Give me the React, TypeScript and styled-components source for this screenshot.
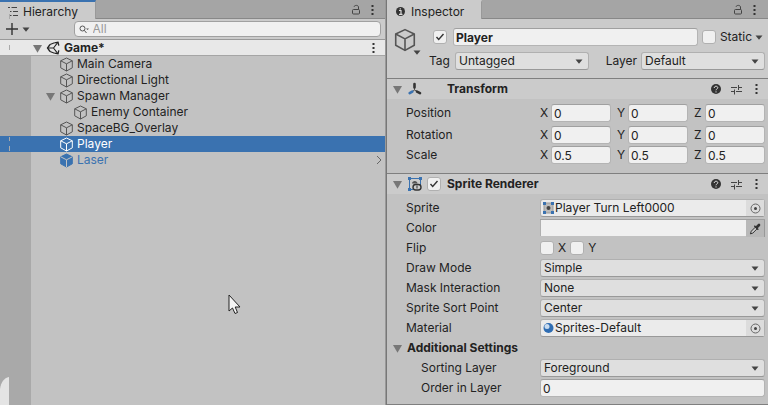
import React from "react";
import styled, { createGlobalStyle, css } from "styled-components";

const GlobalStyle = createGlobalStyle`
  *, *::before, *::after { box-sizing: border-box; }
  body {
    margin: 0;
    background: #c2c2c2;
    color: #222;
    font-family: Inter, "Liberation Sans", sans-serif;
    font-size: 12px;
    line-height: 16px;
  }
  input, select, button { font: inherit; color: inherit; margin: 0; }
  ul, h2, h3 { margin: 0; padding: 0; list-style: none; font-size: inherit; }
`;

/* ---------- page and panels ---------- */

const Editor = styled.main`
  display: grid;
  grid-template-columns: minmax(0, 386fr) minmax(0, 382fr);
  min-height: 100vh;
`;

const Panel = styled.section`
  position: relative;
  display: flex;
  flex-direction: column;
  overflow: hidden;
  background: #c2c2c2;
`;

const InspectorPanel = styled(Panel)`
  border-left: 1px solid #777;
  box-shadow: -1px 0 #999;
`;

const TabBar = styled.header`
  display: flex;
  height: 19px;
  background: #a5a5a5;
  box-shadow: inset 0 -1px #888;
`;

const Tab = styled.h2<{ $active?: boolean }>`
  display: flex;
  align-items: center;
  gap: 5px;
  padding: 2px 17px 0 8px;
  font-weight: 400;
  background: #cbcbcb;
  border-right: 1px solid #999;
  border-top: 2px solid ${(p) => (p.$active ? "#3a72b0" : "#cbcbcb")};
`;

const TabActions = styled.div`
  display: flex;
  align-items: center;
  gap: 10px;
  margin-left: auto;
  padding-right: 12px;
`;

const IconButton = styled.button`
  display: flex;
  align-items: center;
  justify-content: center;
  padding: 0;
  border: 0;
  background: none;
`;

/* ---------- hierarchy ---------- */

const Toolbar = styled.div`
  display: flex;
  align-items: center;
  height: 21px;
  padding: 0 5px 0 6px;
  background: #cbcbcb;
  border-bottom: 1px solid #999;
`;

const AddButton = styled(IconButton)`
  gap: 4px;
  margin-right: auto;
`;

const SearchBox = styled.label`
  display: flex;
  align-items: center;
  gap: 4px;
  width: 82%;
  height: 16px;
  padding: 0 4px;
  background: #f0f0f0;
  border: 1px solid #a0a0a0;
  border-radius: 4px;
`;

const SearchInput = styled.input`
  flex: 1;
  min-width: 0;
  height: 14px;
  padding: 0;
  border: 0;
  outline: 0;
  background: transparent;
  &::placeholder { color: #999; opacity: 1; }
`;

const Tree = styled.ul`
  flex: 1;
  background: linear-gradient(to right, #a9a9a9 31px, #c2c2c2 31px);
`;

const TreeRow = styled.li<{ $depth: number; $kind?: "scene" | "selected" | "prefab" }>`
  display: grid;
  grid-template-columns: 14px 15px 1fr auto;
  align-items: center;
  height: 16px;
  padding-left: ${(p) => 31 + p.$depth * 14}px;
  padding-right: 3px;
  ${(p) => p.$kind === "scene" && css`
    padding-left: 32px;
    padding-right: 11px;
    background: #e8e8e8;
    box-shadow: inset 0 -1px #a5a5a5;
    font-weight: 700;
  `}
  ${(p) => p.$kind === "selected" && css`background: #3a72b0; color: #fff;`}
  ${(p) => p.$kind === "prefab" && css`color: #3a72b0;`}
`;

const TreeName = styled.span`
  padding-left: 3px;
  white-space: nowrap;
`;

const Overlay = styled.svg<{ $left: number; $top?: number; $bottom?: number }>`
  position: absolute;
  left: ${(p) => p.$left}px;
  ${(p) => p.$top !== undefined && `top: ${p.$top}px;`}
  ${(p) => p.$bottom !== undefined && `bottom: ${p.$bottom}px;`}
  pointer-events: none;
`;

/* ---------- inspector ---------- */

const ObjectHeader = styled.div`
  display: grid;
  grid-template-columns: 36px minmax(0, 1fr);
  padding: 9px 3px 8px 6px;
  background: #cbcbcb;
`;

const ObjectIconButton = styled.button`
  display: flex;
  align-items: flex-end;
  align-self: start;
  height: 27px;
  padding: 0;
  border: 0;
  background: none;
  & > svg { flex: none; }
  & > svg:first-child { align-self: flex-start; margin-right: -4px; }
`;

const HeaderRows = styled.div`
  display: grid;
  gap: 6px;
`;

const NameRow = styled.div`
  display: flex;
  align-items: center;
  gap: 4px;
  padding-left: 4px;
`;

const NameInputSlot = styled.div`
  flex: 1;
  display: flex;
  padding-left: 2px;
`;

const TagRow = styled.div`
  display: grid;
  grid-template-columns: 26px minmax(0, 134fr) 52px minmax(0, 124fr);
  align-items: center;
`;

const LayerLabel = styled.label`
  justify-self: end;
  padding-right: 4px;
`;

const Component = styled.section`
  border-top: 1px solid #7f7f7f;
`;

const ComponentHeader = styled.header`
  display: flex;
  align-items: center;
  height: 20px;
  padding: 0 2px 0 5px;
  background: #cbcbcb;
`;

const HeaderIcon = styled.span`
  display: flex;
  width: 22px;
  padding-left: 5px;
`;

const EnableSlot = styled.span`
  display: flex;
  width: 22px;
  padding-left: 2px;
`;

const ComponentTitle = styled.h3`
  font-weight: 700;
  margin-right: auto;
`;

const HeaderActions = styled.div`
  display: grid;
  grid-template-columns: repeat(3, 20px);
  justify-items: center;
  align-items: center;
`;

const Fields = styled.div<{ $transform?: boolean }>`
  display: grid;
  gap: 2px;
  padding: 5px 3px ${(p) => (p.$transform ? 9 : 7)}px 0;
`;

const FieldRow = styled.div<{ $indent?: boolean; $spaced?: boolean }>`
  display: grid;
  grid-template-columns: ${(p) => (p.$indent ? "34px 119px" : "19px 134px")} minmax(0, 1fr);
  align-items: center;
  height: 18px;
  margin-bottom: ${(p) => (p.$spaced ? 2 : 0)}px;
  & > :first-child { grid-column: 2; }
`;

const Axes = styled.div`
  display: grid;
  grid-template-columns: repeat(3, minmax(0, 1fr));
  gap: 6px;
`;

const Axis = styled.label`
  display: grid;
  grid-template-columns: 11px minmax(0, 1fr);
  align-items: center;
`;

const TextInput = styled.input<{ $bold?: boolean }>`
  width: 100%;
  height: 18px;
  padding: 0 2px;
  font-weight: ${(p) => (p.$bold ? 700 : 400)};
  background: #f0f0f0;
  border: 1px solid #b4b4b4;
  border-top-color: #a0a0a0;
  border-radius: 3px;
  outline: 0;
`;

const SelectBox = styled.div`
  display: grid;
  align-items: center;
  & > * { grid-area: 1 / 1; }
  & > svg { justify-self: end; margin-right: 6px; pointer-events: none; }
`;

const SelectInput = styled.select`
  appearance: none;
  width: 100%;
  height: 18px;
  padding: 0 18px 1px 3px;
  line-height: 15px;
  background: #dfdfdf;
  border: 1px solid #b0b0b0;
  border-bottom-color: #999;
  border-radius: 3px;
  outline: 0;
`;

const CheckBox = styled.span`
  display: grid;
  place-items: center;
  & > * { grid-area: 1 / 1; }
  & > svg { visibility: hidden; pointer-events: none; }
  & > input:checked + svg { visibility: visible; }
`;

const CheckInput = styled.input`
  appearance: none;
  width: 14px;
  height: 14px;
  background: #f0f0f0;
  border: 1px solid #b0b0b0;
  border-radius: 3px;
`;

const CheckLabel = styled.label`
  display: flex;
  align-items: center;
  gap: 4px;
`;

const StaticGroup = styled.div`
  display: flex;
  align-items: center;
  gap: 3px;
  padding-right: 2px;
`;

const Flips = styled.div`
  display: flex;
  gap: 4px;
`;

const ObjectField = styled.div`
  display: flex;
  align-items: center;
  height: 18px;
  padding-left: 2px;
  gap: 1px;
  background: #ebebeb;
  border: 1px solid #b0b0b0;
  border-bottom-color: #999;
  border-radius: 3px;
`;

const ObjectButton = styled(IconButton)`
  flex: 1;
  justify-content: flex-start;
  white-space: nowrap;
`;

const PickerButton = styled(IconButton)`
  width: 18px;
  height: 16px;
  background: #dcdcdc;
`;

const ColorField = styled.div`
  display: flex;
  height: 18px;
  border-top: 1px solid #a0a0a0;
`;

const Swatch = styled.button`
  flex: 1;
  height: 16px;
  border: 0;
  border-left: 1px solid #b0b0b0;
  background: #f0f0f0;
`;

const Dropper = styled(IconButton)`
  width: 19px;
  background: #b8b8b8;
  border-right: 1px solid #999;
`;

const Foldout = styled(IconButton)`
  justify-content: flex-start;
  height: 18px;
  padding-left: 5px;
  gap: 4px;
  font-weight: 700;
`;

const EndLine = styled.div`
  height: 1px;
  background: #7f7f7f;
`;

/* ---------- icons ---------- */

const Triangle = ({ small }: { small?: boolean }) =>
  small ? (
    <svg width="8" height="5" viewBox="0 0 8 5"><path d="M.5.5h7L4 4.8z" fill="#444" /></svg>
  ) : (
    <svg width="11" height="9" viewBox="0 0 11 9"><path d="M1 1h9L5.5 8.8z" fill="#777" /></svg>
  );

const Dots = () => (
  <svg width="3" height="12" viewBox="0 0 3 12" fill="#333">
    <rect x=".5" y="1" width="2" height="2" /><rect x=".5" y="5" width="2" height="2" /><rect x=".5" y="9" width="2" height="2" />
  </svg>
);

const Lock = () => (
  <svg width="10" height="12" viewBox="0 0 10 12" fill="none" stroke="#444">
    <rect x="1.5" y="5.500" width="7" height="4.500" rx="1" /><path d="M3 2.800C3.500.8 7.500 1 7.500 3v2.500" />
  </svg>
);

const ListIcon = () => (
  <svg width="10" height="11" viewBox="0 0 10 11" fill="none" stroke="#444">
    <path d="M0 1.500h2M3.500 1.500H9M2 5.500h1.500M5 5.500h5M2 9.500h1.500M5 9.500h5" />
  </svg>
);

const InfoIcon = () => (
  <svg width="11" height="11" viewBox="0 0 11 11">
    <circle cx="5.500" cy="5.500" r="4.500" fill="#333" />
    <path d="M4 4.500h2V8M4 8.300h3.500M5.300 2.200v1.300" stroke="#ddd" strokeWidth="1.200" fill="none" />
  </svg>
);

const Cube = ({ color = "#555", solid, size = 15 }: { color?: string; solid?: boolean; size?: number }) => (
  <svg width={size} height={size} viewBox="0 0 15 15" fill={solid ? color : "none"} stroke={color} strokeLinejoin="round">
    <path d="M7.500 1L13.300 3.800v7L7.500 14 1.700 10.800v-7z" />
    <path d="M1.700 3.800l5.800 3 5.800-3M7.500 6.800V14" stroke={solid ? "#c2c2c2" : color} fill="none" />
  </svg>
);

const UnityIcon = () => (
  <svg width="14" height="14" viewBox="0 0 14 14" fill="none" stroke="#222" strokeWidth="1.300">
    <path d="M8.500 1.800l3.500-.6.800 3.500M12.800 9.300l-.8 3.500-3.500-.6M4 3.500L1.500 7 4 10.500" />
    <path d="M1.500 7h6L12 1.200M7.500 7l4.500 5.800M4 3.500l4.500-1.700M4 10.500l4.500 1.700" strokeWidth="1.100" />
  </svg>
);

const TransformIcon = () => (
  <svg width="14" height="14" viewBox="0 0 14 14" strokeWidth="2.600" strokeLinecap="round">
    <path d="M6.500 6v2l3 1.500M6.500 8l-2 1.400" stroke="#555" strokeWidth="1" fill="none" />
    <path d="M6.500 2v3.500M9 9.600l3 1.500" stroke="#333" /><path d="M4.300 9.600l-2.600 1.500" stroke="#3a72b0" />
  </svg>
);

const SpriteIcon = () => (
  <svg width="14" height="14" viewBox="0 0 14 14" fill="none">
    <path d="M5 12.500H1.500v-11h11V8" stroke="#3a72b0" />
    <path d="M0 0h3v3H0zM11 0h3v3h-3zM0 11h3v3H0z" fill="#3a72b0" />
    <path d="M4 6.500c0-3.500 5.500-3.500 5.500 0z" fill="#555" />
    <rect x="5" y="7.500" width="8" height="5.500" rx="2.700" fill="#ccc" stroke="#333" strokeWidth="1.400" />
    <path d="M9 8.500v3" stroke="#333" />
  </svg>
);

const ThumbIcon = () => (
  <svg width="11" height="12" viewBox="0 0 11 12">
    <rect x="1" y="1" width="9" height="10" fill="#bbb" stroke="#999" />
    <path d="M0 0h3v3H0zM8 0h3v3H8zM0 9h3v3H0zM8 9h3v3H8z" fill="#3a72b0" />
    <circle cx="5.500" cy="6" r="2" fill="#444" />
  </svg>
);

const SphereIcon = () => (
  <svg width="11" height="12" viewBox="0 0 11 12">
    <circle cx="5.500" cy="6" r="5" fill="#2f6db3" /><circle cx="4" cy="4.500" r="2.500" fill="#c9dcf0" />
  </svg>
);

const HelpIcon = () => (
  <svg width="10" height="10" viewBox="0 0 10 10">
    <circle cx="5" cy="5" r="5" fill="#333" />
    <path d="M3.200 4c0-2.500 3.600-2.200 3.600-.3C6.800 5 5 4.800 5 6.300M5 7.300v1.200" stroke="#ddd" fill="none" />
  </svg>
);

const PresetIcon = () => (
  <svg width="11" height="11" viewBox="0 0 11 11" fill="none" stroke="#444">
    <path d="M0 3.500h6M8 3.500h3M7.500 1v5M0 7.500h3M5 7.500h6M3.500 5.500v5" />
  </svg>
);

const TargetIcon = () => (
  <svg width="11" height="11" viewBox="0 0 11 11">
    <circle cx="5.500" cy="5.500" r="4.500" fill="none" stroke="#666" /><circle cx="5.500" cy="5.500" r="1.500" fill="#444" />
  </svg>
);

const DropperIcon = () => (
  <svg width="12" height="12" viewBox="0 0 12 12" fill="none" stroke="#333" strokeLinecap="round">
    <path d="M1.500 10.500l.8-2.300 4-4 1.700 1.700-4 4z" fill="#ccc" />
    <path d="M5.800 3.200l3 3" strokeWidth="1.600" /><path d="M8 4l2-2" strokeWidth="2.600" />
  </svg>
);

const SearchIcon = () => (
  <svg width="10" height="9" viewBox="0 0 10 9" fill="none" stroke="#555">
    <circle cx="3.500" cy="3.500" r="2.500" /><path d="M5.300 5.300L7.500 8" /><path d="M7 3.500h3L8.500 5z" fill="#555" stroke="none" />
  </svg>
);

const PlusIcon = () => (
  <svg width="12" height="12" viewBox="0 0 12 12" stroke="#333" strokeWidth="1.400"><path d="M6 0v12M0 6h12" /></svg>
);

const Chevron = () => (
  <svg width="8" height="10" viewBox="0 0 8 10" fill="none" stroke="#666"><path d="M2 1l4 4-4 4" /></svg>
);

/* ---------- small composites ---------- */

const Check = ({ label, checked }: { label: string; checked?: boolean }) => (
  <CheckBox>
    <CheckInput type="checkbox" aria-label={label} defaultChecked={checked} />
    <svg width="10" height="10" viewBox="0 0 10 10" fill="none" stroke="#333" strokeWidth="1.400"><path d="M1.500 5l2.200 2.500L8.500 2" /></svg>
  </CheckBox>
);

const Dropdown = ({ id, value }: { id: string; value: string }) => (
  <SelectBox>
    <SelectInput id={id} defaultValue={value}><option>{value}</option></SelectInput>
    <Triangle small />
  </SelectBox>
);

const PanelActions = () => (
  <TabActions>
    <IconButton aria-label="Lock"><Lock /></IconButton>
    <IconButton aria-label="Menu"><Dots /></IconButton>
  </TabActions>
);

const ComponentActions = () => (
  <HeaderActions>
    <IconButton aria-label="Help"><HelpIcon /></IconButton>
    <IconButton aria-label="Presets"><PresetIcon /></IconButton>
    <IconButton aria-label="Options"><Dots /></IconButton>
  </HeaderActions>
);

const SelectRow = ({ label, value, indent }: { label: string; value: string; indent?: boolean }) => {
  const id = label.toLowerCase().replace(/ /g, "-");
  return (
    <FieldRow $indent={indent}>
      <label htmlFor={id}>{label}</label>
      <Dropdown id={id} value={value} />
    </FieldRow>
  );
};

const ObjectRow = ({ label, value, icon }: { label: string; value: string; icon: React.ReactNode }) => (
  <FieldRow>
    <span>{label}</span>
    <ObjectField>
      {icon}
      <ObjectButton aria-label={label + ": " + value}>{value}</ObjectButton>
      <PickerButton aria-label={"Select " + label}><TargetIcon /></PickerButton>
    </ObjectField>
  </FieldRow>
);

/* ---------- data ---------- */

type Item = { name: string; depth: number; open?: boolean; kind?: "selected" | "prefab" };

const items: Item[] = [
  { name: "Main Camera", depth: 1 },
  { name: "Directional Light", depth: 1 },
  { name: "Spawn Manager", depth: 1, open: true },
  { name: "Enemy Container", depth: 2 },
  { name: "SpaceBG_Overlay", depth: 1 },
  { name: "Player", depth: 1, kind: "selected" },
  { name: "Laser", depth: 1, kind: "prefab" },
];

const vectors = [
  { name: "Position", value: "0", spaced: true },
  { name: "Rotation", value: "0" },
  { name: "Scale", value: "0.5" },
];

const cubeColor = { selected: "#fff", prefab: "#3a72b0" };

export default function App() {
  return (
    <>
      <GlobalStyle />
      <Editor>
        <Panel>
          <TabBar>
            <Tab $active><ListIcon />Hierarchy</Tab>
            <PanelActions />
          </TabBar>
          <Toolbar>
            <AddButton aria-label="Create"><PlusIcon /><Triangle small /></AddButton>
            <SearchBox>
              <SearchIcon />
              <SearchInput placeholder="All" aria-label="Search" />
            </SearchBox>
          </Toolbar>
          <Tree role="tree">
            <TreeRow role="treeitem" $depth={0} $kind="scene">
              <Triangle /><UnityIcon /><TreeName>Game*</TreeName>
              <IconButton aria-label="Scene menu"><Dots /></IconButton>
            </TreeRow>
            {items.map((item) => (
              <TreeRow role="treeitem" key={item.name} $depth={item.depth} $kind={item.kind}>
                {item.open ? <Triangle /> : <span />}
                <Cube color={item.kind ? cubeColor[item.kind] : "#555"} solid={item.kind === "prefab"} />
                <TreeName>{item.name}</TreeName>
                {item.kind === "prefab" && <Chevron />}
              </TreeRow>
            ))}
          </Tree>
          <Overlay $left={9} $top={14} width="1" height="138" viewBox="0 0 1 138" fill="#aaa">
            <path d="M0 0h1v5H0zM0 31h1v5H0zM0 123h1v4H0zM0 132h1v5H0z" />
          </Overlay>
          <Overlay $left={0} $bottom={0} width="9" height="28" viewBox="0 0 9 28">
            <path d="M9 0C4 1 1 5 0 12v16h9z" fill="#e4e4e4" />
          </Overlay>
          <Overlay $left={228} $top={294} width="14" height="21" viewBox="0 0 14 21">
            <path d="M1 1v16l3.500-3 2.500 5.500 2.500-1L7.200 13H12z" fill="#f4f4f4" stroke="#222" />
          </Overlay>
        </Panel>

        <InspectorPanel>
          <TabBar>
            <Tab><InfoIcon />Inspector</Tab>
            <PanelActions />
          </TabBar>
          <ObjectHeader>
            <ObjectIconButton aria-label="Object icon"><Cube size={24} /><Triangle small /></ObjectIconButton>
            <HeaderRows>
              <NameRow>
                <Check label="Active" checked />
                <NameInputSlot><TextInput $bold aria-label="Name" defaultValue="Player" /></NameInputSlot>
                <StaticGroup>
                  <CheckLabel><Check label="Static" />Static</CheckLabel>
                  <IconButton aria-label="Static options"><Triangle small /></IconButton>
                </StaticGroup>
              </NameRow>
              <TagRow>
                <label htmlFor="tag">Tag</label>
                <Dropdown id="tag" value="Untagged" />
                <LayerLabel htmlFor="layer">Layer</LayerLabel>
                <Dropdown id="layer" value="Default" />
              </TagRow>
            </HeaderRows>
          </ObjectHeader>

          <Component>
            <ComponentHeader>
              <Triangle />
              <HeaderIcon><TransformIcon /></HeaderIcon>
              <EnableSlot />
              <ComponentTitle>Transform</ComponentTitle>
              <ComponentActions />
            </ComponentHeader>
            <Fields $transform>
              {vectors.map((v) => (
                <FieldRow key={v.name} $spaced={v.spaced}>
                  <span>{v.name}</span>
                  <Axes>
                    {["X", "Y", "Z"].map((axis) => (
                      <Axis key={axis}>{axis}<TextInput aria-label={v.name + " " + axis} defaultValue={v.value} /></Axis>
                    ))}
                  </Axes>
                </FieldRow>
              ))}
            </Fields>
          </Component>

          <Component>
            <ComponentHeader>
              <Triangle />
              <HeaderIcon><SpriteIcon /></HeaderIcon>
              <EnableSlot><Check label="Sprite Renderer enabled" checked /></EnableSlot>
              <ComponentTitle>Sprite Renderer</ComponentTitle>
              <ComponentActions />
            </ComponentHeader>
            <Fields>
              <ObjectRow label="Sprite" value="Player Turn Left0000" icon={<ThumbIcon />} />
              <FieldRow>
                <span>Color</span>
                <ColorField>
                  <Swatch aria-label="Color" />
                  <Dropper aria-label="Pick color"><DropperIcon /></Dropper>
                </ColorField>
              </FieldRow>
              <FieldRow>
                <span>Flip</span>
                <Flips>
                  <CheckLabel><Check label="Flip X" />X</CheckLabel>
                  <CheckLabel><Check label="Flip Y" />Y</CheckLabel>
                </Flips>
              </FieldRow>
              <SelectRow label="Draw Mode" value="Simple" />
              <SelectRow label="Mask Interaction" value="None" />
              <SelectRow label="Sprite Sort Point" value="Center" />
              <ObjectRow label="Material" value="Sprites-Default" icon={<SphereIcon />} />
              <Foldout aria-expanded="true"><Triangle />Additional Settings</Foldout>
              <SelectRow label="Sorting Layer" value="Foreground" indent />
              <FieldRow $indent>
                <label htmlFor="order">Order in Layer</label>
                <TextInput id="order" defaultValue="0" />
              </FieldRow>
            </Fields>
            <EndLine />
          </Component>
        </InspectorPanel>
      </Editor>
    </>
  );
}
